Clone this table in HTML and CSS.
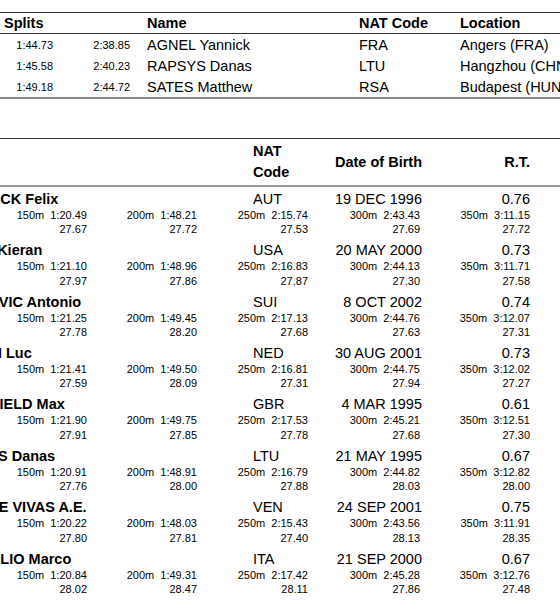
FILE: index.html
```html
<!DOCTYPE html>
<html lang="en">
<head>
<meta charset="utf-8">
<title>Results</title>
<link rel="stylesheet" href="styles.css">
</head>
<body>
<div class="page">
  <section class="records">
    <div class="rec-row rec-head">
      <div class="c-splits">Splits</div>
      <div class="c-name">Name</div>
      <div class="c-nat">NAT Code</div>
      <div class="c-loc">Location</div>
    </div>
    <div class="rec-row">
      <div class="c-s1">1:44.73</div><div class="c-s2">2:38.85</div><div class="c-name">AGNEL Yannick</div><div class="c-nat">FRA</div><div class="c-loc">Angers (FRA)</div>
    </div>
    <div class="rec-row">
      <div class="c-s1">1:45.58</div><div class="c-s2">2:40.23</div><div class="c-name">RAPSYS Danas</div><div class="c-nat">LTU</div><div class="c-loc">Hangzhou (CHN)</div>
    </div>
    <div class="rec-row">
      <div class="c-s1">1:49.18</div><div class="c-s2">2:44.72</div><div class="c-name">SATES Matthew</div><div class="c-nat">RSA</div><div class="c-loc">Budapest (HUN)</div>
    </div>
  </section>

  <section class="results">
    <div class="res-head">
      <div class="h-name">Name</div>
      <div class="h-nat">NAT<br>Code</div>
      <div class="h-dob">Date of Birth</div>
      <div class="h-rt">R.T.</div>
    </div>

    <div class="athlete">
      <div class="ath-main"><div class="a-name">AUBOECK Felix</div><div class="a-nat">AUT</div><div class="a-dob">19 DEC 1996</div><div class="a-rt">0.76</div></div>
      <div class="splits">
        <div class="sp"><div class="t">150m  1:20.49</div><div class="d">27.67</div></div>
        <div class="sp"><div class="t">200m  1:48.21</div><div class="d">27.72</div></div>
        <div class="sp"><div class="t">250m  2:15.74</div><div class="d">27.53</div></div>
        <div class="sp"><div class="t">300m  2:43.43</div><div class="d">27.69</div></div>
        <div class="sp"><div class="t">350m  3:11.15</div><div class="d">27.72</div></div>
      </div>
    </div>

    <div class="athlete">
      <div class="ath-main"><div class="a-name">SMITH Kieran</div><div class="a-nat">USA</div><div class="a-dob">20 MAY 2000</div><div class="a-rt">0.73</div></div>
      <div class="splits">
        <div class="sp"><div class="t">150m  1:21.10</div><div class="d">27.97</div></div>
        <div class="sp"><div class="t">200m  1:48.96</div><div class="d">27.86</div></div>
        <div class="sp"><div class="t">250m  2:16.83</div><div class="d">27.87</div></div>
        <div class="sp"><div class="t">300m  2:44.13</div><div class="d">27.30</div></div>
        <div class="sp"><div class="t">350m  3:11.71</div><div class="d">27.58</div></div>
      </div>
    </div>

    <div class="athlete">
      <div class="ath-main"><div class="a-name">DJAKOVIC Antonio</div><div class="a-nat">SUI</div><div class="a-dob">8 OCT 2002</div><div class="a-rt">0.74</div></div>
      <div class="splits">
        <div class="sp"><div class="t">150m  1:21.25</div><div class="d">27.78</div></div>
        <div class="sp"><div class="t">200m  1:49.45</div><div class="d">28.20</div></div>
        <div class="sp"><div class="t">250m  2:17.13</div><div class="d">27.68</div></div>
        <div class="sp"><div class="t">300m  2:44.76</div><div class="d">27.63</div></div>
        <div class="sp"><div class="t">350m  3:12.07</div><div class="d">27.31</div></div>
      </div>
    </div>

    <div class="athlete">
      <div class="ath-main"><div class="a-name">KROON Luc</div><div class="a-nat">NED</div><div class="a-dob">30 AUG 2001</div><div class="a-rt">0.73</div></div>
      <div class="splits">
        <div class="sp"><div class="t">150m  1:21.41</div><div class="d">27.59</div></div>
        <div class="sp"><div class="t">200m  1:49.50</div><div class="d">28.09</div></div>
        <div class="sp"><div class="t">250m  2:16.81</div><div class="d">27.31</div></div>
        <div class="sp"><div class="t">300m  2:44.75</div><div class="d">27.94</div></div>
        <div class="sp"><div class="t">350m  3:12.02</div><div class="d">27.27</div></div>
      </div>
    </div>

    <div class="athlete">
      <div class="ath-main"><div class="a-name">LITCHFIELD Max</div><div class="a-nat">GBR</div><div class="a-dob">4 MAR 1995</div><div class="a-rt">0.61</div></div>
      <div class="splits">
        <div class="sp"><div class="t">150m  1:21.90</div><div class="d">27.91</div></div>
        <div class="sp"><div class="t">200m  1:49.75</div><div class="d">27.85</div></div>
        <div class="sp"><div class="t">250m  2:17.53</div><div class="d">27.78</div></div>
        <div class="sp"><div class="t">300m  2:45.21</div><div class="d">27.68</div></div>
        <div class="sp"><div class="t">350m  3:12.51</div><div class="d">27.30</div></div>
      </div>
    </div>

    <div class="athlete">
      <div class="ath-main"><div class="a-name">RAPSYS Danas</div><div class="a-nat">LTU</div><div class="a-dob">21 MAY 1995</div><div class="a-rt">0.67</div></div>
      <div class="splits">
        <div class="sp"><div class="t">150m  1:20.91</div><div class="d">27.76</div></div>
        <div class="sp"><div class="t">200m  1:48.91</div><div class="d">28.00</div></div>
        <div class="sp"><div class="t">250m  2:16.79</div><div class="d">27.88</div></div>
        <div class="sp"><div class="t">300m  2:44.82</div><div class="d">28.03</div></div>
        <div class="sp"><div class="t">350m  3:12.82</div><div class="d">28.00</div></div>
      </div>
    </div>

    <div class="athlete">
      <div class="ath-main"><div class="a-name">MESTRE VIVAS A.E.</div><div class="a-nat">VEN</div><div class="a-dob">24 SEP 2001</div><div class="a-rt">0.75</div></div>
      <div class="splits">
        <div class="sp"><div class="t">150m  1:20.22</div><div class="d">27.80</div></div>
        <div class="sp"><div class="t">200m  1:48.03</div><div class="d">27.81</div></div>
        <div class="sp"><div class="t">250m  2:15.43</div><div class="d">27.40</div></div>
        <div class="sp"><div class="t">300m  2:43.56</div><div class="d">28.13</div></div>
        <div class="sp"><div class="t">350m  3:11.91</div><div class="d">28.35</div></div>
      </div>
    </div>

    <div class="athlete">
      <div class="ath-main"><div class="a-name">DE TULLIO Marco</div><div class="a-nat">ITA</div><div class="a-dob">21 SEP 2000</div><div class="a-rt">0.67</div></div>
      <div class="splits">
        <div class="sp"><div class="t">150m  1:20.84</div><div class="d">28.02</div></div>
        <div class="sp"><div class="t">200m  1:49.31</div><div class="d">28.47</div></div>
        <div class="sp"><div class="t">250m  2:17.42</div><div class="d">28.11</div></div>
        <div class="sp"><div class="t">300m  2:45.28</div><div class="d">27.86</div></div>
        <div class="sp"><div class="t">350m  3:12.76</div><div class="d">27.48</div></div>
      </div>
    </div>
  </section>
</div>
</body>
</html>
```

FILE: styles.css
```css
html, body {
  margin: 0;
  padding: 0;
  background: #fff;
  overflow: hidden;
}

body {
  font-family: "Liberation Sans", Arial, sans-serif;
  color: #000;
  font-size: 14.5px;
}

.page {
  width: 560px;
  height: 600px;
  overflow: hidden;
}

/* ---------- records table ---------- */
.records {
  margin-top: 12px;
  width: 640px;
  border-top: 1px solid #333;
  border-bottom: 2px solid #8a8a8a;
}

.rec-row {
  display: grid;
  grid-template-columns: 57px 86px 212px 101px 1fr;
  align-items: center;
  height: 21px;
  white-space: nowrap;
}

.rec-head {
  height: 20px;
  font-weight: bold;
  border-bottom: 1px solid #333;
}

.rec-head .c-splits {
  grid-column: 1 / 3;
  padding-left: 4px;
}

.c-s1, .c-s2 {
  font-size: 11px;
  text-align: right;
}

.c-s1 { padding-right: 4px; }
.c-s2 { padding-right: 13px; }

.c-name, .c-nat, .c-loc {
  padding-left: 4px;
}

/* ---------- results table ---------- */
.results {
  margin-top: 39px;
  margin-left: -52px;
  width: 660px;
  border-top: 1px solid #333;
}

.res-head {
  display: grid;
  grid-template-columns: 305px 81px 88px 108px;
  align-items: center;
  height: 46px;
  font-weight: bold;
  line-height: 21px;
  border-bottom: 2px solid #999;
  white-space: nowrap;
}

.h-dob, .h-rt { text-align: right; }

.athlete {
  padding: 3.8px 0 1.6px;
}

.ath-main {
  display: grid;
  grid-template-columns: 305px 81px 88px 108px;
  line-height: 17px;
  white-space: nowrap;
}

.a-name { font-weight: bold; }
.a-dob, .a-rt { text-align: right; }

.splits {
  display: grid;
  grid-template-columns: 139px 110px 111px 112px 110px;
  font-size: 11px;
  line-height: 14.5px;
}

.sp {
  text-align: right;
}

.sp .t {
  white-space: pre;
}
```
